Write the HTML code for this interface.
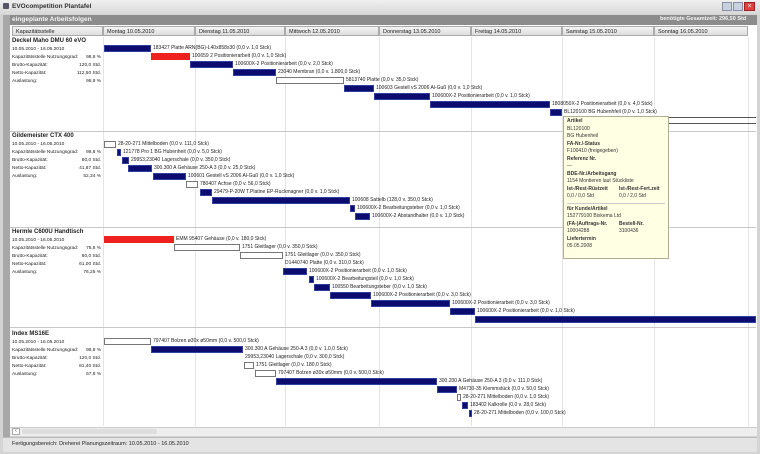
<!DOCTYPE html>
<html><head><meta charset="utf-8"><style>
*{margin:0;padding:0;box-sizing:border-box}
body{width:760px;height:454px;overflow:hidden;background:#d4d4d4;font-family:"Liberation Sans",sans-serif;position:relative}
.a{position:absolute}
.t{position:absolute;font-size:5px;color:#222;white-space:nowrap;line-height:7px}
.b{position:absolute;height:7px;background:#0c0c6e;border:1px solid #3040a0}
.w{position:absolute;height:7px;background:#fff;border:1px solid #777}
.r{position:absolute;height:7px;background:#ee2020}
.lp{position:absolute;left:12px;width:89px;font-size:4.8px;color:#222;line-height:8px}
.lp b{font-size:6px;display:block;line-height:9px}
.lp div{display:flex;justify-content:space-between}
.vl{position:absolute;top:37px;height:389px;width:1px;background:#e4e4e4}
.hl{position:absolute;left:10px;width:746px;height:1px;background:#c8c8c8}
.hd{position:absolute;top:26px;height:10px;font-size:5.5px;line-height:10px;padding-left:3px;background:linear-gradient(#f4f4f4,#dcdcdc);border:1px solid #aaa;color:#222}
.fs{position:absolute;font-size:4px;color:#ccc}
</style></head><body>
<div class="a" style="left:0;top:0;width:760px;height:14px;background:linear-gradient(#f0f0f0,#d8d8d8)"></div>
<div class="a" style="left:3px;top:3px;width:6px;height:6px;background:#556;border-radius:1px"></div>
<div class="t" style="left:12px;top:3px;font-size:6.5px;font-weight:bold;color:#333">EVOcompetition Plantafel</div>
<div class="a" style="left:722px;top:2px;width:10px;height:9px;background:#c8d0e0;border:1px solid #8890a8"></div>
<div class="a" style="left:733px;top:2px;width:10px;height:9px;background:#c8d0e0;border:1px solid #8890a8"></div>
<div class="a" style="left:744px;top:2px;width:11px;height:9px;background:#e04040;border:1px solid #a02020;color:#fff;font-size:7px;line-height:8px;text-align:center">×</div>
<div class="a" style="left:3px;top:15px;width:754px;height:10px;background:#8c8c8c"></div>
<div class="a" style="left:3px;top:15px;width:7px;height:437px;background:#a8a8a8"></div>
<div class="t" style="left:12px;top:16px;font-size:6.5px;font-weight:bold;color:#f4f4f4">eingeplante Arbeitsfolgen</div>
<div class="t" style="left:660px;top:16px;font-size:5.5px;font-weight:bold;color:#f4f4f4">benötigte Gesamtzeit: 296,50 Std</div>
<div class="a" style="left:10px;top:25px;width:747px;height:402px;background:#fff"></div>
<div class="hd" style="left:12px;width:91px">Kapazitätsstelle</div>
<div class="hd" style="left:103px;width:92px">Montag 10.05.2010</div>
<div class="hd" style="left:195px;width:90px">Dienstag 11.05.2010</div>
<div class="hd" style="left:285px;width:94px">Mittwoch 12.05.2010</div>
<div class="hd" style="left:379px;width:92px">Donnerstag 13.05.2010</div>
<div class="hd" style="left:471px;width:91px">Freitag 14.05.2010</div>
<div class="hd" style="left:562px;width:92px">Samstag 15.05.2010</div>
<div class="hd" style="left:654px;width:94px">Sonntag 16.05.2010</div>
<div class="vl" style="left:103px"></div><div class="vl" style="left:195px"></div><div class="vl" style="left:285px"></div><div class="vl" style="left:379px"></div><div class="vl" style="left:471px"></div><div class="vl" style="left:562px"></div><div class="vl" style="left:654px"></div><div class="vl" style="left:748px"></div>
<div class="hl" style="top:131px"></div><div class="hl" style="top:227px"></div><div class="hl" style="top:327px"></div>

<div class="lp" style="top:37px"><b>Deckel Maho DMU 60 eVO</b>10.05.2010 - 16.05.2010<div><span>Kapazitätsstelle Nutzungsgrad:</span><span>98,8 %</span></div><div><span>Brutto-Kapazität:</span><span>120,0 Std.</span></div><div><span>Netto-Kapazität:</span><span>112,50 Std.</span></div><div><span>Auslastung:</span><span>98,8 %</span></div></div>
<div class="lp" style="top:132px"><b>Gildemeister CTX 400</b>10.05.2010 - 16.05.2010<div><span>Kapazitätsstelle Nutzungsgrad:</span><span>98,8 %</span></div><div><span>Brutto-Kapazität:</span><span>80,0 Std.</span></div><div><span>Netto-Kapazität:</span><span>41,87 Std.</span></div><div><span>Auslastung:</span><span>52,34 %</span></div></div>
<div class="lp" style="top:228px"><b>Hermle C600U Handtisch</b>10.05.2010 - 16.05.2010<div><span>Kapazitätsstelle Nutzungsgrad:</span><span>78,8 %</span></div><div><span>Brutto-Kapazität:</span><span>80,0 Std.</span></div><div><span>Netto-Kapazität:</span><span>61,00 Std.</span></div><div><span>Auslastung:</span><span>76,25 %</span></div></div>
<div class="lp" style="top:330px"><b>Index MS16E</b>10.05.2010 - 16.05.2010<div><span>Kapazitätsstelle Nutzungsgrad:</span><span>98,8 %</span></div><div><span>Brutto-Kapazität:</span><span>120,0 Std.</span></div><div><span>Netto-Kapazität:</span><span>81,40 Std.</span></div><div><span>Auslastung:</span><span>67,8 %</span></div></div>

<!-- group 1 -->
<div class="b" style="left:104px;top:45px;width:47px"></div><div class="t" style="left:153px;top:45px">183427 Platte ARN(BG)-L40x858x30 (0,0 v. 1,0 Stck)</div>
<div class="r" style="left:151px;top:53px;width:39px"></div><div class="t" style="left:192px;top:53px">100659 2 Positionierarbeit (0,0 v. 1,0 Stck)</div>
<div class="b" style="left:190px;top:61px;width:43px"></div><div class="t" style="left:235px;top:61px">100600X-2 Positionierarbeit (0,0 v. 2,0 Stck)</div>
<div class="b" style="left:233px;top:69px;width:43px"></div><div class="t" style="left:278px;top:69px">23040 Membran (0,0 v. 1.800,0 Stck)</div>
<div class="w" style="left:276px;top:77px;width:68px"></div><div class="t" style="left:346px;top:77px">5813740 Platte (0,0 v. 35,0 Stck)</div>
<div class="b" style="left:344px;top:85px;width:30px"></div><div class="t" style="left:376px;top:85px">100603 Gestell vS 2006 Al-Guß (0,0 v. 1,0 Stck)</div>
<div class="b" style="left:374px;top:93px;width:56px"></div><div class="t" style="left:432px;top:93px">100600X-2 Positionierarbeit (0,0 v. 1,0 Stck)</div>
<div class="b" style="left:430px;top:101px;width:120px"></div><div class="t" style="left:552px;top:101px">1808050X-2 Positionierarbeit (0,0 v. 4,0 Stck)</div>
<div class="b" style="left:550px;top:109px;width:12px"></div><div class="t" style="left:564px;top:109px">BL120100 BG Hubenhfeil (0,0 v. 1,0 Stck)</div>
<div class="a" style="left:668px;top:117px;width:88px;height:1px;background:#555"></div>
<div class="a" style="left:668px;top:123px;width:88px;height:1px;background:#555"></div>
<!-- group 2 -->
<div class="w" style="left:104px;top:141px;width:12px"></div><div class="t" style="left:118px;top:141px">28-20-271 Mittelboden (0,0 v. 111,0 Stck)</div>
<div class="b" style="left:117px;top:149px;width:4px"></div><div class="t" style="left:123px;top:149px">121778 Pro 1 BG Hubenheit (0,0 v. 5,0 Stck)</div>
<div class="b" style="left:122px;top:157px;width:7px"></div><div class="t" style="left:131px;top:157px">29953,23040 Lagerschale (0,0 v. 350,0 Stck)</div>
<div class="b" style="left:128px;top:165px;width:24px"></div><div class="t" style="left:154px;top:165px">300.300 A Gehäuse 250-A 3 (0,0 v. 25,0 Stck)</div>
<div class="b" style="left:153px;top:173px;width:33px"></div><div class="t" style="left:188px;top:173px">100601 Gestell vS 2006 Al-Guß (0,0 v. 1,0 Stck)</div>
<div class="w" style="left:186px;top:181px;width:12px"></div><div class="t" style="left:200px;top:181px">780407 Achse (0,0 v. 56,0 Stck)</div>
<div class="b" style="left:200px;top:189px;width:12px"></div><div class="t" style="left:214px;top:189px">29479-P-20W T.Platine EP-Ruckmagner (0,0 v. 1,0 Stck)</div>
<div class="b" style="left:212px;top:197px;width:138px"></div><div class="t" style="left:352px;top:197px">100608 Sattelb (128,0 v. 350,0 Stck)</div>
<div class="b" style="left:350px;top:205px;width:5px"></div><div class="t" style="left:357px;top:205px">100600X-2 Bearbeitungsteber (0,0 v. 1,0 Stck)</div>
<div class="b" style="left:355px;top:213px;width:15px"></div><div class="t" style="left:372px;top:213px">100600X-2 Abstandhalter (0,0 v. 1,0 Stck)</div>
<!-- group 3 -->
<div class="r" style="left:104px;top:236px;width:70px"></div><div class="t" style="left:176px;top:236px">EMM 95407 Gehäuse (0,0 v. 180,0 Stck)</div>
<div class="w" style="left:174px;top:244px;width:66px"></div><div class="t" style="left:242px;top:244px">1751 Gleitlager (0,0 v. 350,0 Stck)</div>
<div class="w" style="left:240px;top:252px;width:43px"></div><div class="t" style="left:285px;top:252px">1751 Gleitlager (0,0 v. 350,0 Stck)</div>
<div class="t" style="left:285px;top:260px">D1440740 Platte (0,0 v. 310,0 Stck)</div>
<div class="b" style="left:283px;top:268px;width:24px"></div><div class="t" style="left:309px;top:268px">100600X-2 Positionierarbeit (0,0 v. 1,0 Stck)</div>
<div class="b" style="left:309px;top:276px;width:5px"></div><div class="t" style="left:316px;top:276px">100600X-2 Bearbeitungsteil (0,0 v. 1,0 Stck)</div>
<div class="b" style="left:314px;top:284px;width:16px"></div><div class="t" style="left:332px;top:284px">100550 Bearbeitungsteber (0,0 v. 1,0 Stck)</div>
<div class="b" style="left:330px;top:292px;width:41px"></div><div class="t" style="left:373px;top:292px">100600X-2 Positionierarbeit (0,0 v. 3,0 Stck)</div>
<div class="b" style="left:371px;top:300px;width:79px"></div><div class="t" style="left:452px;top:300px">100600X-2 Positionierarbeit (0,0 v. 3,0 Stck)</div>
<div class="b" style="left:450px;top:308px;width:25px"></div><div class="t" style="left:477px;top:308px">100600X-2 Positionierarbeit (0,0 v. 1,0 Stck)</div>
<div class="b" style="left:475px;top:316px;width:281px"></div>
<!-- group 4 -->
<div class="w" style="left:104px;top:338px;width:47px"></div><div class="t" style="left:153px;top:338px">797407 Bolzen ø30x ø50mm (0,0 v. 500,0 Stck)</div>
<div class="b" style="left:151px;top:346px;width:92px"></div><div class="t" style="left:245px;top:346px">300.300 A Gehäuse 250-A 3 (0,0 v. 1.0,0 Stck)</div>
<div class="t" style="left:245px;top:354px">29953,23040 Lagerschale (0,0 v. 300,0 Stck)</div>
<div class="w" style="left:244px;top:362px;width:10px"></div><div class="t" style="left:256px;top:362px">1751 Gleitlager (0,0 v. 180,0 Stck)</div>
<div class="w" style="left:255px;top:370px;width:21px"></div><div class="t" style="left:278px;top:370px">797407 Bolzen ø30x ø50mm (0,0 v. 500,0 Stck)</div>
<div class="b" style="left:276px;top:378px;width:161px"></div><div class="t" style="left:439px;top:378px">300.200 A Gehäuse 250-A 3 (0,0 v. 111,0 Stck)</div>
<div class="b" style="left:437px;top:386px;width:20px"></div><div class="t" style="left:459px;top:386px">M4730-35 Klemmstück (0,0 v. 50,0 Stck)</div>
<div class="w" style="left:457px;top:394px;width:4px"></div><div class="t" style="left:463px;top:394px">28-20-271 Mittelboden (0,0 v. 1,0 Stck)</div>
<div class="b" style="left:462px;top:402px;width:6px"></div><div class="t" style="left:470px;top:402px">183402 Kalkrolle (0,0 v. 28,0 Stck)</div>
<div class="b" style="left:469px;top:410px;width:3px"></div><div class="t" style="left:474px;top:410px">28-20-271 Mittelboden (0,0 v. 100,0 Stck)</div>

<!-- tooltip -->
<div class="a" style="left:563px;top:116px;width:106px;height:143px;background:#ffffe4;border:1px solid #b0b090;font-size:5px;color:#333;line-height:7.5px;padding:1px 3px">
<b>Artikel</b><br>BL120100<br>BG Hubenheil<br><b>FA-Nr./-Status</b><br>F100410 (freigegeben)<br><b>Referenz Nr.</b><br>—<br><b>BDE-Nr./Arbeitsgang</b><br>1154 Montieren laut Stückliste<br><span style="display:inline-block;width:52px"><b>Ist-/Rest-Rüstzeit</b></span><b>Ist-/Rest-Fert.zeit</b><br><span style="display:inline-block;width:52px">0,0 / 0,0 Std</span>0,0 / 2,0 Std<br>
<div style="border-top:1px solid #ccc;margin:2px 0"></div>
<b>für Kunde/Artikel</b><br>152779100 Bixkema Ltd<br><span style="display:inline-block;width:52px"><b>(FA-)Auftrags-Nr.</b></span><b>Bestell-Nr.</b><br><span style="display:inline-block;width:52px">10004288</span>3100436<br><b>Liefertermin</b><br>05.05.2008</div>

<!-- scrollbar & status -->
<div class="a" style="left:10px;top:427px;width:747px;height:9px;background:#eee;border-top:1px solid #ccc"></div>
<div class="a" style="left:12px;top:428px;width:8px;height:7px;background:#fff;border:1px solid #aaa;font-size:5px;line-height:5px;text-align:center">‹</div>
<div class="a" style="left:22px;top:429px;width:135px;height:5px;background:#ddd;border-radius:2px"></div>
<div class="a" style="left:3px;top:437px;width:754px;height:15px;background:#e4e4e4;border-top:1px solid #bbb"></div>
<div class="t" style="left:12px;top:441px;font-size:5.5px">Fertigungsbereich: Dreherei Planungszeitraum: 10.05.2010 - 16.05.2010</div>
</body></html>
